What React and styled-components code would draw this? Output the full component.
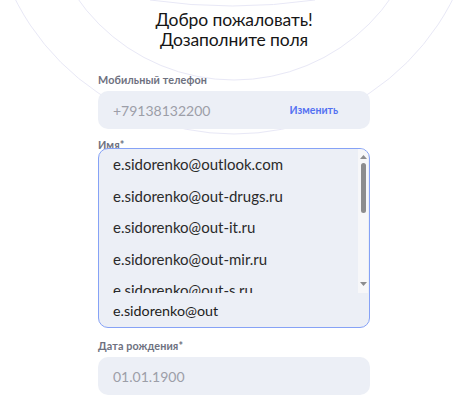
import React from 'react';
import styled, { createGlobalStyle } from 'styled-components';

const GlobalStyle = createGlobalStyle`
  html, body {
    margin: 0;
    padding: 0;
    background: #fff;
  }

  body {
    font-family: 'Lato', 'Liberation Sans', Arial, sans-serif;
    -webkit-font-smoothing: antialiased;
  }
`;

const Page = styled.div`
  position: relative;
  width: 456px;
  height: 407px;
  overflow: hidden;
  padding-left: 12px;
  box-sizing: border-box;
`;

const Backdrop = styled.svg`
  position: absolute;
  left: 0;
  top: 0;
  width: 456px;
  height: 407px;
  pointer-events: none;
`;

const Form = styled.div`
  position: relative;
  width: 272px;
  margin: 0 auto;
  padding-top: 10px;
  display: flex;
  flex-direction: column;
`;

const Title = styled.h1`
  margin: 0 0 23px;
  font-size: 17.5px;
  line-height: 20px;
  font-weight: 400;
  letter-spacing: -0.1px;
  color: #161616;
  text-align: center;
`;

const Field = styled.div`
  display: flex;
  flex-direction: column;
  gap: 4px;
  margin-bottom: ${(p) => p.$gap || 9}px;
`;

const Label = styled.label`
  font-size: 10.8px;
  line-height: 14px;
  font-weight: 700;
  color: #6e717f;
  letter-spacing: 0.1px;
`;

const Input = styled.div`
  height: 38px;
  border-radius: 10px;
  background: #eceff6;
  display: flex;
  align-items: center;
  justify-content: space-between;
  padding: 0 32px 0 15px;
  box-sizing: border-box;
  font-size: 14px;
  color: #9c9ea8;
`;

const ChangeLink = styled.span`
  font-size: 10.5px;
  font-weight: 700;
  color: #5472f2;
`;

const Combo = styled.div`
  position: relative;
  margin-top: -8px;
  height: 180px;
  border: 1px solid #86a2f6;
  border-radius: 10px;
  background: #eceff6;
  box-sizing: border-box;
  overflow: hidden;
  display: flex;
  flex-direction: column;
`;

const Suggestions = styled.div`
  display: flex;
  height: 144px;
`;

const Options = styled.ul`
  flex: 1;
  list-style: none;
  margin: 0;
  padding: 0;
  overflow: hidden;
`;

const Option = styled.li`
  height: 31.5px;
  line-height: 31.5px;
  padding-left: 14px;
  font-size: 15px;
  color: #2a2a2a;
  white-space: nowrap;
`;

const Scrollbar = styled.div`
  width: 10px;
  margin-right: 1px;
  background: #f7f7f9;
  display: flex;
  flex-direction: column;
  align-items: center;
  padding: 6px 0 7px;
  box-sizing: border-box;
`;

const Thumb = styled.div`
  width: 5px;
  height: 50px;
  margin-top: 4px;
  border-radius: 3px;
  background: #8c8c8e;
`;

const Track = styled.div`
  flex: 1;
`;

const Typed = styled.div`
  flex: 1;
  display: flex;
  align-items: center;
  padding-left: 14px;
  font-size: 14.3px;
  color: #1d1d1d;
`;

const Arrow = ({ down }) => (
  <svg width="7" height="4" viewBox="0 0 7 4">
    <path d={down ? 'M0 0h7L3.5 4z' : 'M0 4h7L3.5 0z'} fill="#8c8c8e" />
  </svg>
);

const emails = [
  'e.sidorenko@outlook.com',
  'e.sidorenko@out-drugs.ru',
  'e.sidorenko@out-it.ru',
  'e.sidorenko@out-mir.ru',
  'e.sidorenko@out-s.ru',
];

export default function App() {
  return (
    <>
      <GlobalStyle />
      <Page>
        <Backdrop viewBox="0 0 456 407">
          <g fill="none" stroke="#e8e8f6" strokeWidth="1">
            <circle cx="234" cy="-111" r="191" />
            <circle cx="234" cy="-111" r="245" />
            <path d="M150 0 Q232 12 315 0" />
          </g>
        </Backdrop>
        <Form>
          <Title>
            Добро пожаловать!
            <br />
            Дозаполните поля
          </Title>

          <Field>
            <Label>Мобильный телефон</Label>
            <Input>
              +79138132200
              <ChangeLink>Изменить</ChangeLink>
            </Input>
          </Field>

          <Field $gap={11}>
            <Label>Имя*</Label>
            <Combo>
              <Suggestions>
                <Options>
                  {emails.map((mail) => (
                    <Option key={mail}>{mail}</Option>
                  ))}
                </Options>
                <Scrollbar>
                  <Arrow />
                  <Thumb />
                  <Track />
                  <Arrow down />
                </Scrollbar>
              </Suggestions>
              <Typed>e.sidorenko@out</Typed>
            </Combo>
          </Field>

          <Field>
            <Label>Дата рождения*</Label>
            <Input>01.01.1900</Input>
          </Field>
        </Form>
      </Page>
    </>
  );
}
